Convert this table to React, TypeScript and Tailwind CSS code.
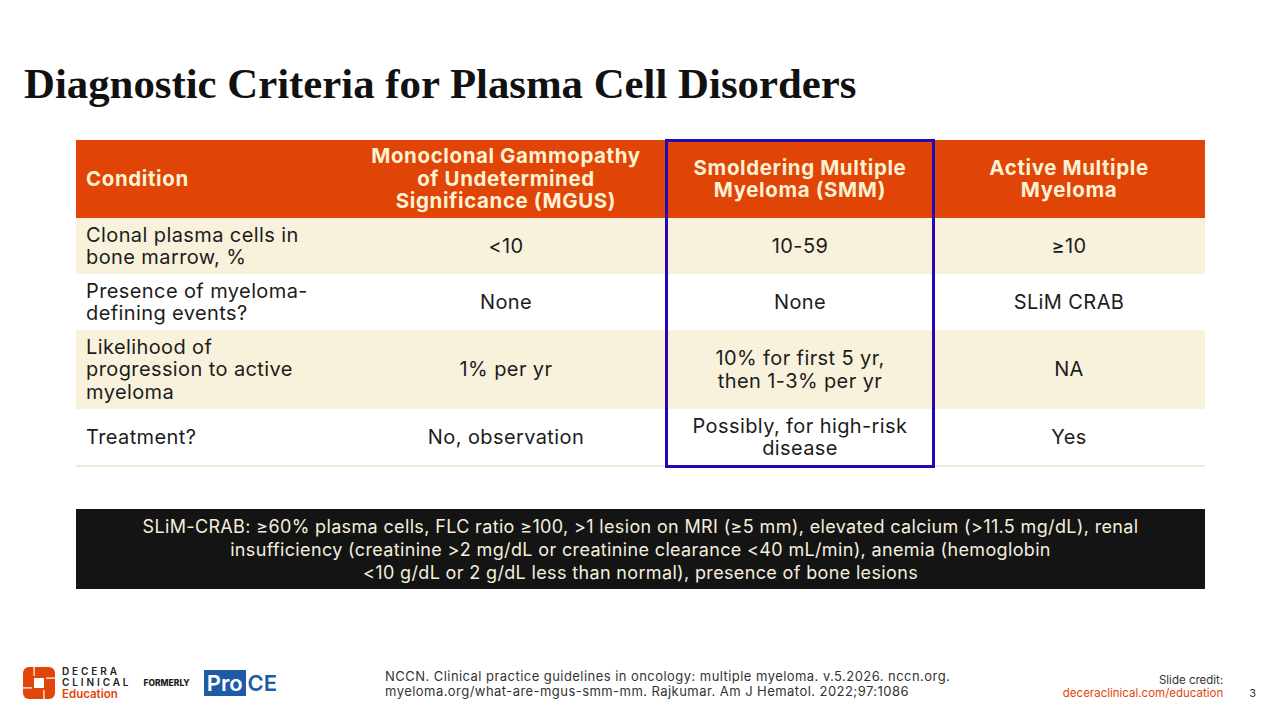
import { Fragment, type ReactNode } from "react";

const body = "font-['Inter','Liberation_Sans',sans-serif]";

type Row = { label: string[]; mgus: string; smm: string[]; active: string; h: string; bg: string };

const rows: Row[] = [
  { label: ["Clonal plasma cells in", "bone marrow, %"], mgus: "<10", smm: ["10-59"], active: "≥10", h: "h-[56px]", bg: "bg-[#f8f1dc]" },
  { label: ["Presence of myeloma-", "defining events?"], mgus: "None", smm: ["None"], active: "SLiM CRAB", h: "h-[56px]", bg: "bg-white" },
  { label: ["Likelihood of", "progression to active", "myeloma"], mgus: "1% per yr", smm: ["10% for first 5 yr,", "then 1-3% per yr"], active: "NA", h: "h-[79px]", bg: "bg-[#f8f1dc]" },
  { label: ["Treatment?"], mgus: "No, observation", smm: ["Possibly, for high-risk", "disease"], active: "Yes", h: "h-[56px]", bg: "bg-white" },
];

function Lines({ parts }: { parts: string[] }): ReactNode {
  return parts.map((p, i) => (
    <Fragment key={i}>
      {i > 0 && <br />}
      {p}
    </Fragment>
  ));
}

function DeceraMark() {
  return (
    <svg width="32" height="32" viewBox="0 0 32 32">
      <rect x="0" y="0" width="32" height="32" rx="6" fill="#e0450a" />
      <rect x="11" y="11" width="10" height="10" fill="#fff" />
      <rect x="10.5" y="0" width="1.2" height="9" fill="#fff" />
      <rect x="20.3" y="23" width="1.2" height="9" fill="#fff" />
      <rect x="0" y="20.3" width="9" height="1.2" fill="#fff" />
      <rect x="23" y="10.5" width="9" height="1.2" fill="#fff" />
    </svg>
  );
}

export default function App() {
  return (
    <div className={`w-[1280px] h-[720px] bg-white relative overflow-hidden flex flex-col ${body}`}>
      <h1 className="pl-[24px] pt-[60px] font-['Liberation_Serif','Times_New_Roman',serif] font-bold text-[42.8px] leading-[48px] text-[#111] whitespace-nowrap">
        Diagnostic Criteria for Plasma Cell Disorders
      </h1>

      <div className="ml-[76px] mt-[32px] w-[1129px] relative">
        <div className="grid grid-cols-[269px_322px_266px_272px] h-[78px] bg-[#e04406] text-[#fdf1d3] font-bold text-[20.5px] leading-[22.5px] tracking-[0.6px]">
          <div className="flex items-center pl-[10px]">Condition</div>
          <div className="flex items-center justify-center text-center">
            Monoclonal Gammopathy
            <br />
            of Undetermined
            <br />
            Significance (MGUS)
          </div>
          <div className="flex items-center justify-center text-center">
            Smoldering Multiple
            <br />
            Myeloma (SMM)
          </div>
          <div className="flex items-center justify-center text-center">
            Active Multiple
            <br />
            Myeloma
          </div>
        </div>
        {rows.map((r) => (
          <div key={r.label[0]} className={`grid grid-cols-[269px_322px_266px_272px] ${r.h} ${r.bg} text-[#1c1c1c] text-[20px] leading-[22.5px] tracking-[0.4px]`}>
            <div className="flex items-center pl-[10px]">
              <div>
                <Lines parts={r.label} />
              </div>
            </div>
            <div className="flex items-center justify-center text-center">{r.mgus}</div>
            <div className="flex items-center justify-center text-center">
              <div>
                <Lines parts={r.smm} />
              </div>
            </div>
            <div className="flex items-center justify-center text-center">{r.active}</div>
          </div>
        ))}
        <div className="h-[2px] bg-[#ece8da]" />
        <div className="absolute left-[589px] top-[-1px] w-[270px] h-[329px] border-[3px] border-[#2408b4]" />
      </div>

      <div className="ml-[76px] mt-[42px] w-[1129px] h-[80px] bg-[#141414] flex items-center justify-center text-center text-[#f5eede] text-[18px] leading-[23px] tracking-[0.35px]">
        <div>
          SLiM-CRAB: ≥60% plasma cells, FLC ratio ≥100, &gt;1 lesion on MRI (≥5 mm), elevated calcium (&gt;11.5 mg/dL), renal
          <br />
          insufficiency (creatinine &gt;2 mg/dL or creatinine clearance &lt;40 mL/min), anemia (hemoglobin
          <br />
          &lt;10 g/dL or 2 g/dL less than normal), presence of bone lesions
        </div>
      </div>

      <div className="mt-[74px] flex items-center h-[40px]">
        <div className="ml-[23px] flex items-center">
          <DeceraMark />
          <div className="ml-[7px] flex flex-col">
            <span className="text-[10px] leading-[11px] font-semibold tracking-[2.9px] text-[#222]">DECERA</span>
            <span className="text-[10px] leading-[11px] font-semibold tracking-[2.9px] text-[#222]">CLINICAL</span>
            <span className="text-[11.5px] leading-[12px] font-semibold text-[#e0450a]">Education</span>
          </div>
        </div>
        <span className="ml-[12px] text-[8.5px] font-extrabold text-[#222]">FORMERLY</span>
        <div className="ml-[14px] flex items-center h-[26px] text-[22px] font-semibold leading-none">
          <span className="bg-[#1f5aa6] text-white h-[26px] flex items-center px-[3px]">Pro</span>
          <span className="text-[#1f5aa6] pl-[2px]">CE</span>
        </div>
        <div className="ml-[108px] text-[13px] leading-[15px] tracking-[0.45px] text-[#333] mt-[2px]">
          <div>NCCN. Clinical practice guidelines in oncology: multiple myeloma. v.5.2026. nccn.org.</div>
          <div>myeloma.org/what-are-mgus-smm-mm. Rajkumar. Am J Hematol. 2022;97:1086</div>
        </div>
        <div className="ml-auto flex flex-col items-end text-[11.5px] leading-[13px] mt-[8px]">
          <span className="text-[#333]">Slide credit:</span>
          <span className="text-[#e0450a]">deceraclinical.com/education</span>
        </div>
        <span className="ml-[26px] mr-[24px] text-[11px] text-[#333] mt-[20px]">3</span>
      </div>
    </div>
  );
}
